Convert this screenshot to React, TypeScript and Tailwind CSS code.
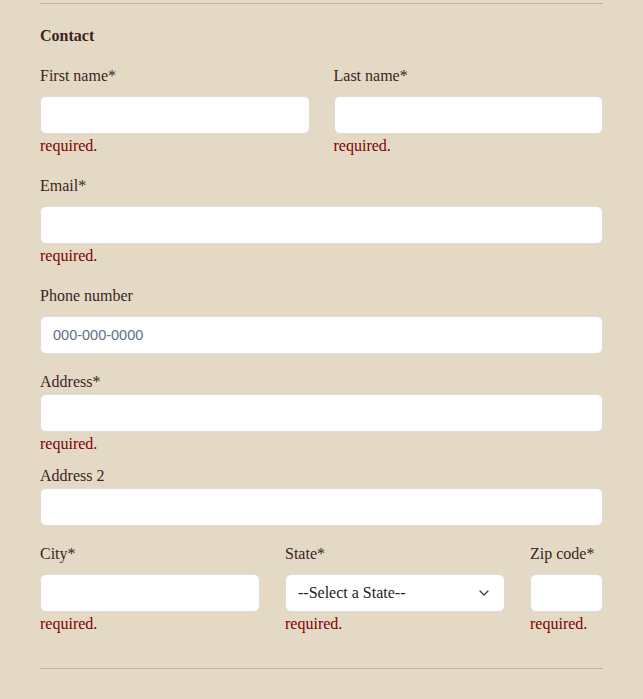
import React from 'react';
import { ChevronDown } from 'lucide-react';

const serif = "font-['Liberation_Serif','Times_New_Roman',serif]";

function Label({ children, className = '' }: { children: React.ReactNode; className?: string }) {
  return <label className={`block text-[16px] leading-[20px] text-[#3d1f22] ${className}`}>{children}</label>;
}

function Input({ placeholder, className = '' }: { placeholder?: string; className?: string }) {
  return (
    <input
      placeholder={placeholder}
      className={`block w-full h-[38px] rounded-[6px] border border-[#dcdcdc] bg-white px-3 font-['Liberation_Sans',Arial,sans-serif] text-[14.5px] text-[#333] placeholder:text-[#5f7286] outline-none ${className}`}
    />
  );
}

function Required() {
  return <p className="mt-[2px] text-[16px] leading-[20px] text-[#800000]">required.</p>;
}

export default function App() {
  return (
    <div className={`min-h-[699px] bg-[#e4d9c5] px-10 ${serif}`}>
      <div className="pt-[3px]">
        <div className="border-t border-[#c4b3a5]" />

        <h3 className="mt-[22px] text-[16px] font-bold leading-[20px] text-[#3d1f22]">Contact</h3>

        {/* first / last name */}
        <div className="mt-[20px] grid grid-cols-2 gap-x-6">
          <div>
            <Label>First name*</Label>
            <Input className="mt-[10px]" />
            <Required />
          </div>
          <div>
            <Label>Last name*</Label>
            <Input className="mt-[10px]" />
            <Required />
          </div>
        </div>

        <div className="mt-[20px]">
          <Label>Email*</Label>
          <Input className="mt-[10px]" />
          <Required />
        </div>

        <div className="mt-[20px]">
          <Label>Phone number</Label>
          <Input className="mt-[10px]" placeholder="000-000-0000" />
        </div>

        <div className="mt-[18px]">
          <Label>Address*</Label>
          <Input className="mt-[2px]" />
          <Required />
        </div>

        <div className="mt-[12px]">
          <Label>Address 2</Label>
          <Input className="mt-[2px]" />
        </div>

        {/* city / state / zip */}
        <div className="mt-[18px] grid grid-cols-[220px_220px_1fr] gap-x-[25px]">
          <div>
            <Label>City*</Label>
            <Input className="mt-[10px]" />
            <Required />
          </div>
          <div>
            <Label>State*</Label>
            <div className="relative mt-[10px]">
              <select className={`block w-full h-[38px] appearance-none rounded-[6px] border border-[#dcdcdc] bg-white pl-3 pr-8 text-[16px] text-[#222] outline-none ${serif}`}>
                <option>--Select a State--</option>
              </select>
              <ChevronDown className="pointer-events-none absolute right-[13px] top-1/2 h-4 w-4 -translate-y-1/2 text-[#444]" strokeWidth={2} />
            </div>
            <Required />
          </div>
          <div>
            <Label>Zip code*</Label>
            <Input className="mt-[10px]" />
            <Required />
          </div>
        </div>

        <div className="mt-[34px] border-t border-[#c4b3a5]" />
      </div>
    </div>
  );
}
